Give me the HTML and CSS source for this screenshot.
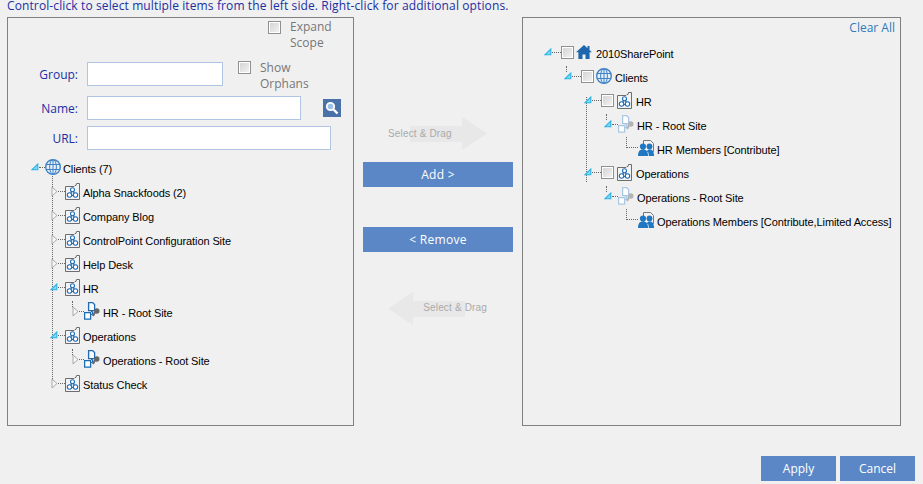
FILE: index.html
```html
<!DOCTYPE html>
<html lang="en">
<head>
<meta charset="utf-8">
<title>Select items</title>
<link rel="stylesheet" href="styles.css">
</head>
<body>
<svg class="defs" width="0" height="0" aria-hidden="true">
  <symbol id="i-open" viewBox="0 0 8 8"><path d="M.8 6.800 6.800 1V6.800Z" fill="#7fd8f5" stroke="#2cb4e6" stroke-width="1.100"/></symbol>
  <symbol id="i-closed" viewBox="0 0 7 11"><path d="M1 1 6 5.500 1 10Z" fill="#f6f6f6" stroke="#a9a9a9"/></symbol>
  <symbol id="i-globe" viewBox="0 0 16 16"><g fill="none" stroke="#3f82c6"><circle cx="8" cy="8" r="7.300" fill="#e6f0fa" stroke-width="1.400"/><ellipse cx="8" cy="8" rx="3.400" ry="7.300"/><path d="M8 .7v14.600M.9 5.500h14.200M.9 10.500h14.200"/></g></symbol>
  <symbol id="i-site" viewBox="0 0 15 17"><path d="M.5 3.500h8.500l1-1h1l.5-2h3v16H.5Z" fill="#f3f3f3" stroke="#6d6d6d"/><g fill="#fff" stroke="#1f6cb5" stroke-width="1.100"><path d="M7.500 7 4.500 12.500h6Z" fill="none"/><circle cx="7.500" cy="6.800" r="2"/><circle cx="4.500" cy="12" r="2.200"/><circle cx="10.500" cy="12" r="2.200"/></g></symbol>
  <symbol id="i-root" viewBox="0 0 16 18"><g fill="#fff" stroke="#1c6ab4" stroke-width="1.300"><path d="M4.600.6h4l2 2v6h-6Z"/><path d="M.6 10.600h6v6.600h-6Z"/></g><path d="M7 9.500h1.500v3H7" fill="none" stroke="#1c6ab4"/><path d="M9 14 11 10" stroke="#666" stroke-width="2"/><circle cx="12.800" cy="9" r="2.700" fill="#666"/></symbol>
  <symbol id="i-root-faded" viewBox="0 0 16 18"><g fill="#fff" stroke="#a9c8e6" stroke-width="1.300"><path d="M4.600.6h4l2 2v6h-6Z"/><path d="M.6 10.600h6v6.600h-6Z"/></g><path d="M7 9.500h1.500v3H7" fill="none" stroke="#a9c8e6"/><path d="M9 14 11 10" stroke="#b3b3b3" stroke-width="2"/><circle cx="12.800" cy="9" r="2.700" fill="#b3b3b3"/></symbol>
  <symbol id="i-members" viewBox="0 0 16 16"><path d="M5.500.5h7l3 3v8h-10Z" fill="#f4f4f4" stroke="#777"/><g fill="#1f78c1"><circle cx="5" cy="6.500" r="3.100"/><path d="M0 16c0-4.500 1.500-6.500 5-6.500s5 2 5 6.500Z"/><circle cx="11.500" cy="6.500" r="2.900"/><path d="M10.800 16c0-2-.5-4-1.500-5.500 1-1 4-1.500 5.200 0 1 1 1.500 3 1.500 5.500Z"/></g></symbol>
  <symbol id="i-home" viewBox="0 0 16 14"><path d="M8 0 0 7.300h2.400V14h4.100V9.500h3V14h4.100V7.300H16L13.500 5V1h-2v2.200Z" fill="#1c66ad"/></symbol>
  <symbol id="i-arrow" viewBox="0 0 99 33"><path d="M22 9H74V0L99 16.500 74 33V25H22Z" fill="#e8e8e8"/></symbol>
</svg>

<p class="hint">Control-click to select multiple items from the left side. Right-click for additional options.</p>

<main class="columns">
  <section class="panel">
    <label class="check check-expand"><input type="checkbox"><span>Expand<br>Scope</span></label>
    <div class="field field-group">
      <label class="field-label">Group:</label>
      <input class="text text-group" type="text">
      <label class="check check-orphans"><input type="checkbox"><span>Show<br>Orphans</span></label>
    </div>
    <div class="field field-name">
      <label class="field-label">Name:</label>
      <input class="text text-name" type="text">
      <button class="search" type="button" aria-label="Search"><svg width="14" height="14" viewBox="0 0 14 14"><circle cx="5.500" cy="5.500" r="3.700" fill="#9cc0e6" stroke="#fff" stroke-width="1.800"/><path d="M8.500 8.500 12.500 12.500" stroke="#fff" stroke-width="2.400"/></svg></button>
    </div>
    <div class="field">
      <label class="field-label">URL:</label>
      <input class="text text-url" type="text">
    </div>

    <ul class="tree tree-left">
      <li class="row l-clients"><svg class="exp exp-open"><use href="#i-open"/></svg><i class="dash"></i><svg class="ico ico-globe"><use href="#i-globe"/></svg><span>Clients (7)</span></li>
      <li class="row l-site"><svg class="exp exp-closed"><use href="#i-closed"/></svg><i class="dash"></i><svg class="ico ico-site"><use href="#i-site"/></svg><span>Alpha Snackfoods (2)</span></li>
      <li class="row l-site"><svg class="exp exp-closed"><use href="#i-closed"/></svg><i class="dash"></i><svg class="ico ico-site"><use href="#i-site"/></svg><span>Company Blog</span></li>
      <li class="row l-site"><svg class="exp exp-closed"><use href="#i-closed"/></svg><i class="dash"></i><svg class="ico ico-site"><use href="#i-site"/></svg><span>ControlPoint Configuration Site</span></li>
      <li class="row l-site"><svg class="exp exp-closed"><use href="#i-closed"/></svg><i class="dash"></i><svg class="ico ico-site"><use href="#i-site"/></svg><span>Help Desk</span></li>
      <li class="row l-site"><svg class="exp exp-open"><use href="#i-open"/></svg><i class="dash"></i><svg class="ico ico-site"><use href="#i-site"/></svg><span>HR</span></li>
      <li class="row l-root stub"><svg class="exp exp-closed"><use href="#i-closed"/></svg><i class="dash"></i><svg class="ico ico-root"><use href="#i-root"/></svg><span>HR - Root Site</span></li>
      <li class="row l-site"><svg class="exp exp-open"><use href="#i-open"/></svg><i class="dash"></i><svg class="ico ico-site"><use href="#i-site"/></svg><span>Operations</span></li>
      <li class="row l-root stub"><svg class="exp exp-closed"><use href="#i-closed"/></svg><i class="dash"></i><svg class="ico ico-root"><use href="#i-root"/></svg><span>Operations - Root Site</span></li>
      <li class="row l-site"><svg class="exp exp-closed"><use href="#i-closed"/></svg><i class="dash"></i><svg class="ico ico-site"><use href="#i-site"/></svg><span>Status Check</span></li>
    </ul>
  </section>

  <section class="middle">
    <div class="drag drag-right"><svg class="drag-arrow"><use href="#i-arrow"/></svg><span class="drag-text">Select &amp; Drag</span></div>
    <button class="btn btn-wide btn-add" type="button">Add &gt;</button>
    <button class="btn btn-wide btn-remove" type="button">&lt; Remove</button>
    <div class="drag drag-left"><svg class="drag-arrow flip"><use href="#i-arrow"/></svg><span class="drag-text">Select &amp; Drag</span></div>
  </section>

  <section class="panel panel-right">
    <a class="clear">Clear All</a>
    <ul class="tree tree-right">
      <li class="row r-0"><svg class="exp exp-open"><use href="#i-open"/></svg><i class="dash"></i><input class="box" type="checkbox"><svg class="ico ico-home"><use href="#i-home"/></svg><span>2010SharePoint</span></li>
      <li class="row r-1 stub"><svg class="exp exp-open"><use href="#i-open"/></svg><i class="dash"></i><input class="box" type="checkbox"><svg class="ico ico-globe"><use href="#i-globe"/></svg><span>Clients</span></li>
      <li class="row r-2"><svg class="exp exp-open"><use href="#i-open"/></svg><i class="dash"></i><input class="box" type="checkbox"><svg class="ico ico-site"><use href="#i-site"/></svg><span>HR</span></li>
      <li class="row r-3 stub"><svg class="exp exp-open"><use href="#i-open"/></svg><i class="dash"></i><svg class="ico ico-root"><use href="#i-root-faded"/></svg><span>HR - Root Site</span></li>
      <li class="row r-4 stub long"><i class="dash"></i><svg class="ico ico-members"><use href="#i-members"/></svg><span>HR Members [Contribute]</span></li>
      <li class="row r-2"><svg class="exp exp-open"><use href="#i-open"/></svg><i class="dash"></i><input class="box" type="checkbox"><svg class="ico ico-site"><use href="#i-site"/></svg><span>Operations</span></li>
      <li class="row r-3 stub"><svg class="exp exp-open"><use href="#i-open"/></svg><i class="dash"></i><svg class="ico ico-root"><use href="#i-root-faded"/></svg><span>Operations - Root Site</span></li>
      <li class="row r-4 stub long"><i class="dash"></i><svg class="ico ico-members"><use href="#i-members"/></svg><span>Operations Members [Contribute,Limited Access]</span></li>
    </ul>
  </section>
</main>

<footer class="actions">
  <button class="btn btn-small" type="button">Apply</button>
  <button class="btn btn-small" type="button">Cancel</button>
</footer>
</body>
</html>
```
FILE: styles.css
```css
* { box-sizing: border-box; }
html, body { margin: 0; padding: 0; }
body {
  width: 923px;
  height: 484px;
  overflow: hidden;
  background: #f0f0f0;
  font-family: "Open Sans", "Liberation Sans", sans-serif;
  font-size: 12px;
  color: #000;
}
.defs { position: absolute; }
.hint {
  margin: 0;
  height: 17px;
  padding-left: 7px;
  line-height: 12px;
  font-size: 12px;
  letter-spacing: 0.115px;
  color: #1a2fa4;
  white-space: nowrap;
}
.columns { display: flex; padding-left: 7px; height: 409px; }
.panel {
  width: 347px;
  height: 409px;
  border: 1px solid #808080;
}
.panel-right { width: 379px; position: relative; margin-left: 9px; }

/* form */
.check { display: flex; align-items: flex-start; gap: 9px; color: #777; line-height: 16px; }
.check input, .box {
  appearance: none;
  flex: none;
  width: 13px;
  height: 13px;
  margin: 3px 0 0;
  border: 1px solid #909090;
  box-shadow: inset 0 0 0 1px #fff;
  background: linear-gradient(135deg, #d2d2d2, #f4f4f4);
}
.check span { padding-top: 1px; }
.check-orphans span { padding-top: 2px; }
.check-expand { height: 44px; padding: 0 0 0 260px; }
.field { display: flex; align-items: flex-start; margin-bottom: 6px; }
.field-group { height: 34px; margin-bottom: 0; }
.field-name { height: 24px; }
.field-label {
  width: 70px;
  margin-right: 9px;
  text-align: right;
  line-height: 26px;
  height: 24px;
  color: #1a2fa4;
}
.text {
  display: block;
  height: 24px;
  padding: 0 4px;
  border: 1px solid #b0c4e4;
  background: #fff;
  outline: 0;
}
.text-group { width: 136px; }
.text-name { width: 214px; }
.text-url { width: 244px; }
.check-orphans { margin: -4px 0 0 15px; }
.search {
  display: flex;
  align-items: center;
  justify-content: center;
  width: 18px;
  height: 18px;
  margin: 3px 0 0 22px;
  padding: 0;
  border: 0;
  background: #4a72a8;
}

/* trees */
.tree { list-style: none; margin: 0; padding: 0; position: relative; }
.tree-left { margin-top: 6px; }
.tree-right { margin-top: 23px; }
.row {
  display: flex;
  align-items: center;
  height: 24px;
  position: relative;
  white-space: nowrap;
  font-family: "Liberation Sans", sans-serif;
  font-size: 11px;
  letter-spacing: -0.1px;
}
.row span { padding-top: 1px; }
.exp, .dash, .ico { position: relative; top: -1px; }
.tree-left::before {
  content: "";
  position: absolute;
  left: 44px;
  top: 20px;
  height: 209px;
  border-left: 1px dotted #666;
}
.tree-right::before {
  content: "";
  position: absolute;
  left: 63px;
  top: 56px;
  height: 85px;
  border-left: 1px dotted #666;
}
.stub::before {
  content: "";
  position: absolute;
  top: 1px;
  height: 6px;
  border-left: 1px dotted #666;
}
.long::before { top: 0; height: 11px; }
.exp, .ico { flex: none; display: block; }
.exp-open { width: 8px; height: 8px; }
.exp-closed { width: 7px; height: 11px; }
.dash { flex: none; width: 6px; border-top: 1px dotted #666; }
.ico-globe { width: 16px; height: 16px; }
.ico-site { width: 15px; height: 17px; }
.ico-root { width: 16px; height: 18px; }
.ico-members { width: 16px; height: 16px; }
.ico-home { width: 16px; height: 14px; }
.box { margin: 0; position: relative; top: -1px; }

.l-clients { padding-left: 23px; }
.l-clients .ico { margin-right: 2px; }
.l-site { padding-left: 43px; }
.l-site .exp-open { margin-left: -1px; width: 8px; }
.l-site .dash { width: 7px; }
.l-site .ico { margin-right: 3px; }
.l-root { padding-left: 64px; }
.l-root::before { left: 64px; }
.l-root .dash { width: 5px; }
.l-root .ico { margin-right: 3px; }

.r-0 { padding-left: 21px; }
.r-1 { padding-left: 41px; }
.r-1::before { left: 43px; }
.r-2 { padding-left: 61px; }
.r-3 { padding-left: 81px; }
.r-3::before { left: 83px; }
.r-4 { padding-left: 103px; }
.r-4::before { left: 103px; }
.r-0 .dash, .r-1 .dash, .r-2 .dash { width: 9px; }
.r-0 .box { margin-right: 2px; }
.r-1 .box { margin-right: 2px; }
.r-2 .box { margin-right: 3px; }
.r-0 .ico { margin-right: 4px; }
.r-1 .ico { margin-right: 3px; }
.r-2 .ico { margin-right: 4px; }
.r-3 .dash { width: 6px; }
.r-3 .ico { margin-right: 3px; }
.r-4 .dash { width: 12px; top: -2px; }
.r-4 .ico { margin-right: 3px; }

.clear {
  position: absolute;
  top: 1px;
  right: 5px;
  color: #2f79bb;
  line-height: 17px;
}

/* middle */
.middle { width: 159px; padding-left: 9px; display: flex; flex-direction: column; }
.drag { position: relative; height: 33px; }
.drag-right { margin: 100px 0 12px 25px; width: 99px; }
.drag-left { margin: 40px 0 0 25px; width: 99px; }
.drag-arrow { display: block; width: 99px; height: 33px; }
.flip { transform: scaleX(-1); }
.drag-text {
  position: absolute;
  top: 10px;
  font-family: "Liberation Sans", sans-serif;
  font-size: 10px;
  letter-spacing: 0.16px;
  color: #aaa;
  white-space: nowrap;
}
.drag-right .drag-text { left: 0; top: 11px; }
.drag-left .drag-text { right: 0; }
.btn {
  display: block;
  height: 25px;
  padding: 0;
  border: 0;
  background: #5b87c7;
  color: #fff;
  font-family: inherit;
  font-size: 12px;
  text-align: center;
}
.btn-wide { width: 150px; letter-spacing: 0.3px; }
.btn-remove { margin-top: 40px; }

/* footer */
.actions { display: flex; justify-content: flex-end; gap: 4px; padding: 30px 8px 0 0; }
.btn-small { width: 75px; }
```
